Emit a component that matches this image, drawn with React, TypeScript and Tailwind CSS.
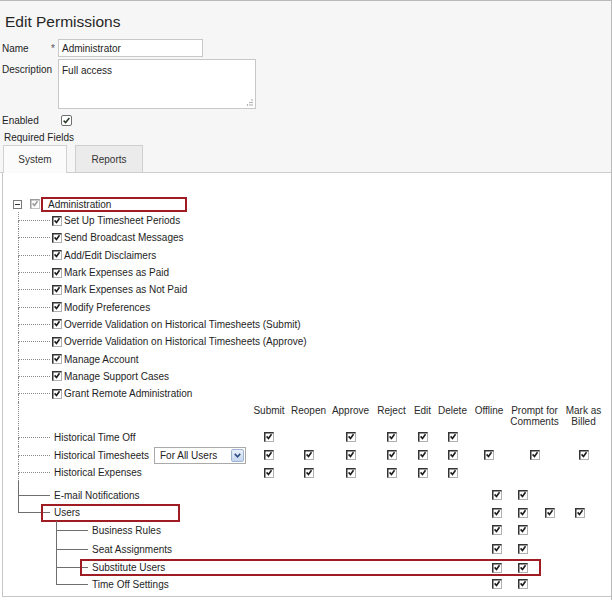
import React from 'react';

type Col = { label: string[]; w: string };

const UPPER_COLS: Col[] = [
  { label: ['Submit'], w: 'w-[38px]' },
  { label: ['Reopen'], w: 'w-[41px]' },
  { label: ['Approve'], w: 'w-[43px]' },
  { label: ['Reject'], w: 'w-[39px]' },
  { label: ['Edit'], w: 'w-[23px]' },
  { label: ['Delete'], w: 'w-[37px]' },
  { label: ['Offline'], w: 'w-[36px]' },
  { label: ['Prompt for', 'Comments'], w: 'w-[55px]' },
  { label: ['Mark as', 'Billed'], w: 'w-[43px]' },
];

const LOWER_W = ['w-[26px]', 'w-[26px]', 'w-[28px]', 'w-[32px]'];

const ADMIN_ITEMS = [
  'Set Up Timesheet Periods',
  'Send Broadcast Messages',
  'Add/Edit Disclaimers',
  'Mark Expenses as Paid',
  'Mark Expenses as Not Paid',
  'Modify Preferences',
  'Override Validation on Historical Timesheets (Submit)',
  'Override Validation on Historical Timesheets (Approve)',
  'Manage Account',
  'Manage Support Cases',
  'Grant Remote Administration',
];

const Check = ({ muted = false }: { muted?: boolean }) => (
  <svg width="10" height="10" viewBox="0 0 10 10" className="shrink-0">
    <rect x="0.5" y="0.5" width="9" height="9" fill="#fff" stroke={muted ? '#c4c4c4' : '#b0b0b0'} />
    <path d="M0.75 9.5V0.75H9.5" fill="none" stroke={muted ? '#9a9a9a' : '#333'} strokeWidth="1.5" />
    <path d="M2.6 4.4l1.9 2.1 3-4.2" fill="none" stroke={muted ? '#9a9a9a' : '#1c1c1c'} strokeWidth="1.6" />
  </svg>
);

const Branch = ({ w, last = false, solid = false }: { w: string; last?: boolean; solid?: boolean }) => {
  const line = solid ? 'border-[#6e6e6e]' : 'border-dotted border-[#8a8a8a]';
  return (
    <div className={`${w} self-stretch flex flex-col shrink-0`}>
      <div className={`flex-1 border-l border-b ${line}`} />
      <div className={`flex-1 ${last ? '' : `border-l ${line}`}`} />
    </div>
  );
};

const UpperCells = ({ on }: { on: boolean[] }) => (
  <div className="flex items-center">
    {UPPER_COLS.map((c, i) => (
      <div key={i} className={`${c.w} flex justify-center`}>
        {on[i] ? <Check /> : null}
      </div>
    ))}
  </div>
);

const LowerCells = ({ n }: { n: number }) => (
  <div className="flex items-center">
    {LOWER_W.slice(0, n).map((w, i) => (
      <div key={i} className={`${w} flex justify-center`}>
        <Check />
      </div>
    ))}
  </div>
);

const SelectBox = () => (
  <div className="w-[92px] h-[17px] border border-[#a9a9a9] bg-white flex items-center justify-between pl-[5px] pr-[1px]">
    <span className="text-[10px] text-[#222]">For All Users</span>
    <div className="w-[13px] h-[13px] rounded-[2px] border border-[#9db3d3] bg-gradient-to-b from-[#e8f0fb] to-[#c5d6ee] flex items-center justify-center">
      <svg width="7" height="5" viewBox="0 0 7 5">
        <path d="M0.8 0.9L3.5 3.8 6.2 0.9" fill="none" stroke="#2d4f86" strokeWidth="1.6" />
      </svg>
    </div>
  </div>
);

export default function App() {
  const all = [true, true, true, true, true, true, true, true, true];
  return (
    <div className="w-[612px] h-[600px] border-t border-r border-[#b9b9b9] bg-white font-['Liberation_Sans',Arial,sans-serif] text-[10px] text-[#1e1e1e] overflow-hidden">
      {/* header form */}
      <div className="h-[172px] bg-[#f6f6f6] border-b border-[#cdcdcd] flex flex-col">
        <div className="pt-[11px] pl-[5px] text-[15.5px] leading-[20px] text-[#262626]">Edit Permissions</div>

        <div className="mt-[7px] flex items-center h-[18px]">
          <span className="w-[51px] pl-[2px]">Name</span>
          <span className="w-[7px] text-[#555]">*</span>
          <div className="w-[145px] h-[18px] border border-[#c8c8c8] bg-white flex items-center pl-[3px]">Administrator</div>
        </div>

        <div className="mt-[2px] flex items-start">
          <span className="w-[58px] pl-[2px] pt-[3px]">Description</span>
          <div className="w-[198px] h-[50px] border border-[#c8c8c8] bg-white pl-[3px] pt-[3px] flex flex-col justify-between">
            <span>Full access</span>
            <div className="flex justify-end pr-[2px] pb-[2px]">
              <svg width="7" height="7" viewBox="0 0 7 7">
                <circle cx="6" cy="1" r="0.7" fill="#888" />
                <circle cx="4" cy="3.5" r="0.7" fill="#888" />
                <circle cx="6" cy="3.5" r="0.7" fill="#888" />
                <circle cx="1.5" cy="6" r="0.7" fill="#888" />
                <circle cx="4" cy="6" r="0.7" fill="#888" />
                <circle cx="6" cy="6" r="0.7" fill="#888" />
              </svg>
            </div>
          </div>
        </div>

        <div className="mt-[5px] flex items-center h-[12px]">
          <span className="w-[61px] pl-[2px]">Enabled</span>
          <div className="w-[11px] h-[11px] border border-[#6f6f6f] rounded-[2px] bg-white flex items-center justify-center">
            <svg width="9" height="9" viewBox="0 0 9 9">
              <path d="M1.6 4.6l2 2 3.8-4.6" fill="none" stroke="#2b3b2b" strokeWidth="1.5" />
            </svg>
          </div>
        </div>

        <div className="mt-[6px] pl-[4px] leading-[12px]">Required Fields</div>

        <div className="mt-[1px] pl-[3px] flex items-end h-[27px]">
          <div className="w-[64px] h-[28px] -mb-[1px] border border-b-0 border-[#d2d2d2] bg-[#fbfbfb] flex items-center justify-center text-[#333]">
            System
          </div>
          <div className="ml-[8px] w-[68px] h-[27px] border border-b-0 border-[#cfcfcf] bg-[#ebebeb] flex items-center justify-center text-[#333]">
            Reports
          </div>
        </div>
      </div>

      {/* permissions tree */}
      <div className="ml-[2px] h-[424px] border-l border-b border-[#c6c6c6] pt-[23px] flex flex-col">
        <div className="flex items-center h-[16px]">
          <div className="w-[10px]" />
          <div className="w-[9px] h-[9px] border border-[#7a7a7a] bg-white flex items-center justify-center">
            <div className="w-[5px] h-px bg-[#333]" />
          </div>
          <div className="ml-[8px]">
            <Check muted />
          </div>
          <div className="ml-[1px] w-[146px] h-[15px] border-2 border-[#9e1c22] pl-[5px] flex items-center">Administration</div>
        </div>

        {ADMIN_ITEMS.map((t) => (
          <div key={t} className="flex items-center h-[17.3px]">
            <div className="w-[15px] shrink-0" />
            <Branch w="w-[32px]" />
            <div className="ml-[2px]">
              <Check />
            </div>
            <span className="ml-[2px] whitespace-nowrap">{t}</span>
          </div>
        ))}

        <div className="flex h-[26px]">
          <div className="w-[15px] shrink-0" />
          <div className="w-[232px] border-l border-dotted border-[#8a8a8a]" />
          {UPPER_COLS.map((c, i) => (
            <div key={i} className={`${c.w} pt-[2.5px] text-center leading-[11px] text-[#2a2a2a]`}>
              {c.label.map((l) => (
                <div key={l} className="whitespace-nowrap">{l}</div>
              ))}
            </div>
          ))}
        </div>

        <div className="flex items-center h-[18px]">
          <div className="w-[15px] shrink-0" />
          <Branch w="w-[32px]" />
          <div className="w-[200px] pl-[4px]">Historical Time Off</div>
          <UpperCells on={[true, false, true, true, true, true]} />
        </div>
        <div className="flex items-center h-[18px]">
          <div className="w-[15px] shrink-0" />
          <Branch w="w-[32px]" />
          <div className="w-[200px] pl-[4px] flex items-center">
            <span className="w-[100px]">Historical Timesheets</span>
            <SelectBox />
          </div>
          <UpperCells on={all} />
        </div>
        <div className="flex items-center h-[17px]">
          <div className="w-[15px] shrink-0" />
          <Branch w="w-[32px]" />
          <div className="w-[200px] pl-[4px]">Historical Expenses</div>
          <UpperCells on={[true, true, true, true, true, true]} />
        </div>

        <div className="flex h-[5px]">
          <div className="w-[15px] shrink-0" />
          <div className="border-l border-[#6e6e6e]" />
        </div>

        <div className="flex items-center h-[18px]">
          <div className="w-[481px] flex items-center self-stretch">
            <div className="w-[15px] shrink-0" />
            <Branch w="w-[32px]" solid />
            <span className="ml-[4px]">E-mail Notifications</span>
          </div>
          <LowerCells n={2} />
        </div>

        <div className="flex items-center h-[17px]">
          <div className="w-[481px] flex items-center self-stretch">
            <div className="w-[15px] shrink-0" />
            <Branch w="w-[23px]" last solid />
            <div className="w-[139px] h-[18px] border-2 border-[#9e1c22] flex items-center">
              <div className="w-[7px] border-t border-[#6e6e6e]" />
              <span className="ml-[4px]">Users</span>
            </div>
          </div>
          <LowerCells n={4} />
        </div>

        <div className="flex items-center h-[18px]">
          <div className="w-[481px] flex items-center self-stretch">
            <div className="w-[53px] shrink-0" />
            <Branch w="w-[32px]" solid />
            <span className="ml-[4px]">Business Rules</span>
          </div>
          <LowerCells n={2} />
        </div>

        <div className="flex items-center h-[20px]">
          <div className="w-[481px] flex items-center self-stretch">
            <div className="w-[53px] shrink-0" />
            <Branch w="w-[32px]" solid />
            <span className="ml-[4px]">Seat Assignments</span>
          </div>
          <LowerCells n={2} />
        </div>

        <div className="flex items-center h-[17px]">
          <div className="w-[53px] shrink-0" />
          <Branch w="w-[24px]" solid />
          <div className="w-[461px] h-[17px] border-2 border-[#9e1c22] flex items-center">
            <div className="w-[402px] flex items-center">
              <div className="w-[6px] border-t border-[#6e6e6e]" />
              <span className="ml-[4px]">Substitute Users</span>
            </div>
            <LowerCells n={2} />
          </div>
        </div>

        <div className="flex items-center h-[16px]">
          <div className="w-[481px] flex items-center self-stretch">
            <div className="w-[53px] shrink-0" />
            <Branch w="w-[32px]" last solid />
            <span className="ml-[4px]">Time Off Settings</span>
          </div>
          <LowerCells n={2} />
        </div>
      </div>
    </div>
  );
}
